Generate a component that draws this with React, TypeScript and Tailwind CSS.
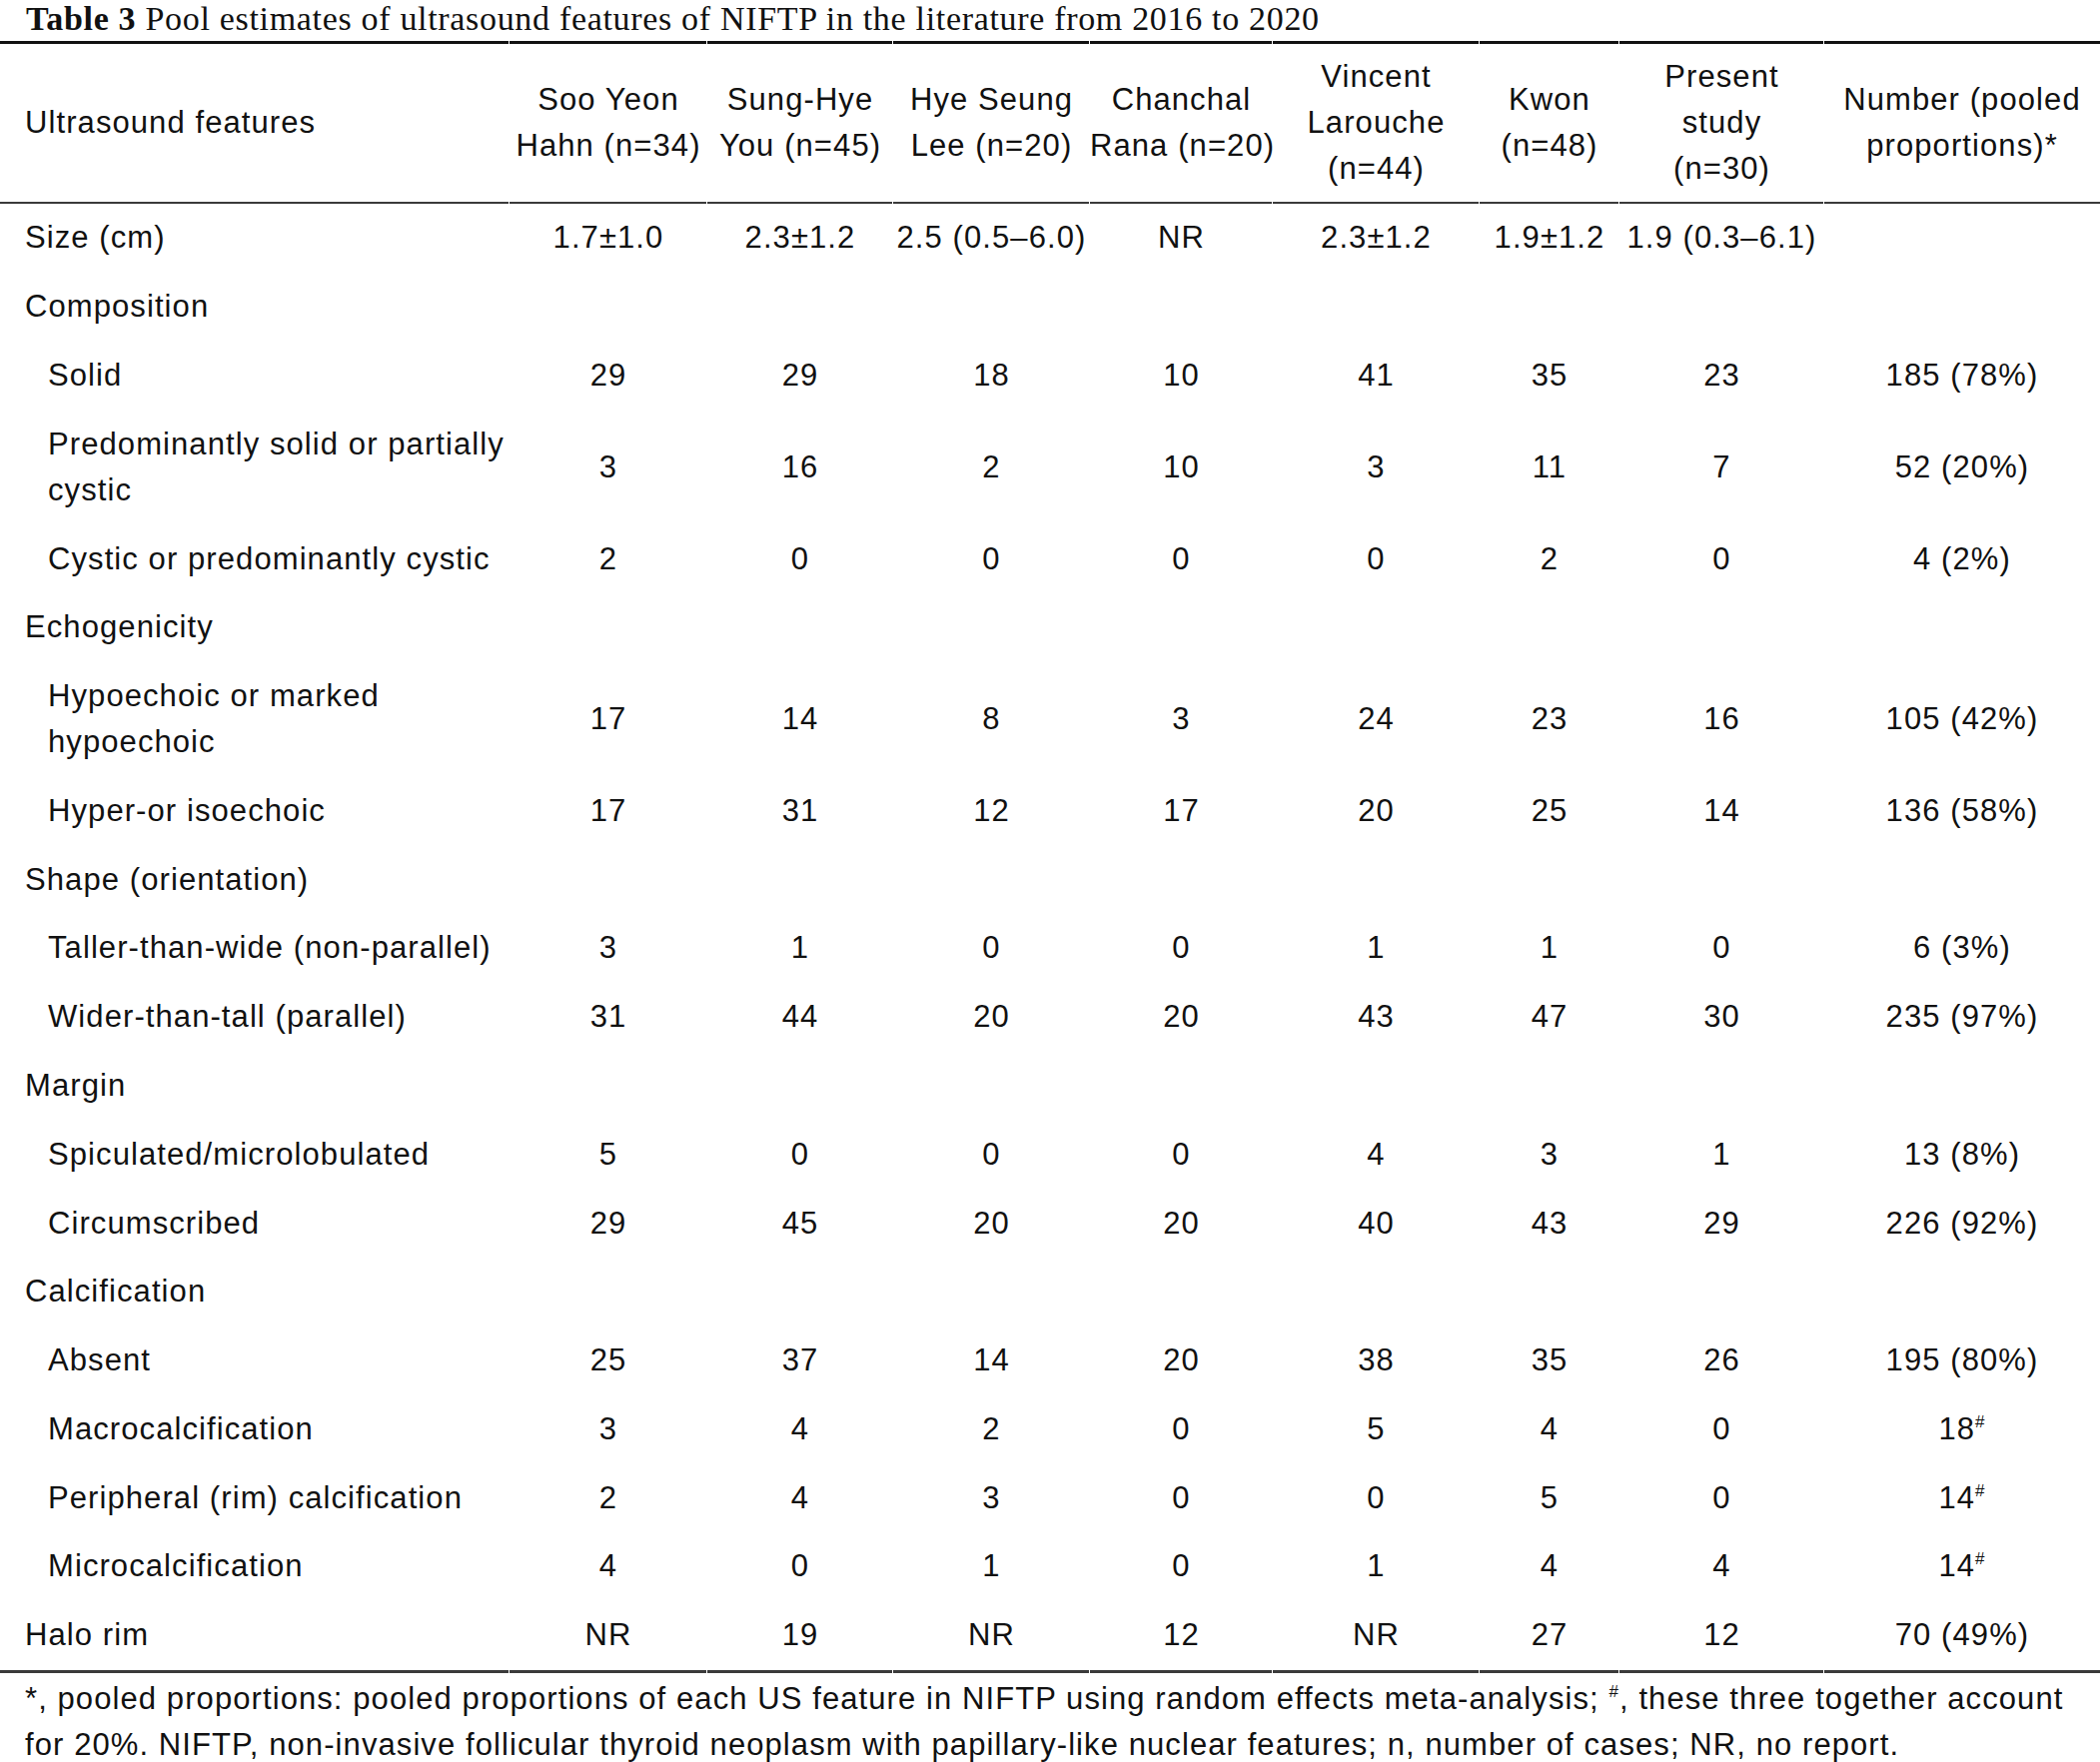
import React from "react";

const COLS =
  "grid grid-cols-[510px_198px_186px_197px_183px_207px_140px_205px_276px]";

type Row = {
  label: React.ReactNode;
  sub?: boolean;
  vals?: string[];
};

const rows: Row[] = [
  { label: "Size (cm)", vals: ["1.7±1.0", "2.3±1.2", "2.5 (0.5–6.0)", "NR", "2.3±1.2", "1.9±1.2", "1.9 (0.3–6.1)", ""] },
  { label: "Composition" },
  { label: "Solid", sub: true, vals: ["29", "29", "18", "10", "41", "35", "23", "185 (78%)"] },
  {
    label: (
      <>
        Predominantly solid or partially
        <br />
        cystic
      </>
    ),
    sub: true,
    vals: ["3", "16", "2", "10", "3", "11", "7", "52 (20%)"],
  },
  { label: "Cystic or predominantly cystic", sub: true, vals: ["2", "0", "0", "0", "0", "2", "0", "4 (2%)"] },
  { label: "Echogenicity" },
  {
    label: (
      <>
        Hypoechoic or marked
        <br />
        hypoechoic
      </>
    ),
    sub: true,
    vals: ["17", "14", "8", "3", "24", "23", "16", "105 (42%)"],
  },
  { label: "Hyper-or isoechoic", sub: true, vals: ["17", "31", "12", "17", "20", "25", "14", "136 (58%)"] },
  { label: "Shape (orientation)" },
  { label: "Taller-than-wide (non-parallel)", sub: true, vals: ["3", "1", "0", "0", "1", "1", "0", "6 (3%)"] },
  { label: "Wider-than-tall (parallel)", sub: true, vals: ["31", "44", "20", "20", "43", "47", "30", "235 (97%)"] },
  { label: "Margin" },
  { label: "Spiculated/microlobulated", sub: true, vals: ["5", "0", "0", "0", "4", "3", "1", "13 (8%)"] },
  { label: "Circumscribed", sub: true, vals: ["29", "45", "20", "20", "40", "43", "29", "226 (92%)"] },
  { label: "Calcification" },
  { label: "Absent", sub: true, vals: ["25", "37", "14", "20", "38", "35", "26", "195 (80%)"] },
  { label: "Macrocalcification", sub: true, vals: ["3", "4", "2", "0", "5", "4", "0", "18#"] },
  { label: "Peripheral (rim) calcification", sub: true, vals: ["2", "4", "3", "0", "0", "5", "0", "14#"] },
  { label: "Microcalcification", sub: true, vals: ["4", "0", "1", "0", "1", "4", "4", "14#"] },
  { label: "Halo rim", vals: ["NR", "19", "NR", "12", "NR", "27", "12", "70 (49%)"] },
];

const headers: string[][] = [
  ["Soo Yeon", "Hahn (n=34)"],
  ["Sung-Hye", "You (n=45)"],
  ["Hye Seung", "Lee (n=20)"],
  ["Chanchal", "Rana (n=20)"],
  ["Vincent", "Larouche", "(n=44)"],
  ["Kwon", "(n=48)"],
  ["Present", "study", "(n=30)"],
  ["Number (pooled", "proportions)*"],
];

const Hash = () => (
  <span className="relative -top-[12px] text-[17px] leading-none">#</span>
);

const Cell = ({ v }: { v: string }) =>
  v.endsWith("#") ? (
    <>
      {v.slice(0, -1)}
      <Hash />
    </>
  ) : (
    <>{v}</>
  );

// segmented rule, like the per-cell borders in the source pdf
const Rule = ({ className }: { className: string }) => (
  <div className={COLS}>
    {Array.from({ length: 9 }).map((_, i) => (
      <div key={i} className={`${className} ${i < 8 ? "mr-[1px]" : ""}`} />
    ))}
  </div>
);

export default function App() {
  return (
    <div className="w-[2102px] bg-white text-[#111] font-['Liberation_Sans',Arial,sans-serif] text-[31px] leading-[46px] tracking-[0.035em]">
      <div className="h-[41px] pl-[26px] font-['Liberation_Serif','Times_New_Roman',serif] text-[34px] leading-[38px] tracking-[0.02em] whitespace-nowrap">
        <span className="font-bold">Table 3</span> Pool estimates of ultrasound features of NIFTP in the literature from 2016 to 2020
      </div>
      <Rule className="h-[3px] bg-[#111]" />

      <div className={`${COLS} h-[158px] items-center`}>
        <div className="pl-[25px] whitespace-nowrap">Ultrasound features</div>
        {headers.map((h, i) => (
          <div key={i} className="text-center whitespace-nowrap">
            {h.map((line, j) => (
              <div key={j}>{line}</div>
            ))}
          </div>
        ))}
      </div>
      <Rule className="h-[2px] bg-[#3a3a3a]" />

      <div className="flex flex-col">
        {rows.map((r, i) => (
          <div key={i} className={`${COLS} py-[11.4px] items-center`}>
            <div
              className={`whitespace-nowrap ${r.sub ? "pl-[48px]" : "pl-[25px]"}`}
            >
              {r.label}
            </div>
            {r.vals?.map((v, j) => (
              <div key={j} className="text-center whitespace-nowrap">
                <Cell v={v} />
              </div>
            ))}
          </div>
        ))}
      </div>
      <Rule className="h-[3px] bg-[#3a3a3a]" />

      <div className="pl-[25px] pt-[3px] whitespace-nowrap">
        *, pooled proportions: pooled proportions of each US feature in NIFTP using random effects meta-analysis; <Hash />, these three together account
        <br />
        for 20%. NIFTP, non-invasive follicular thyroid neoplasm with papillary-like nuclear features; n, number of cases; NR, no report.
      </div>
    </div>
  );
}
